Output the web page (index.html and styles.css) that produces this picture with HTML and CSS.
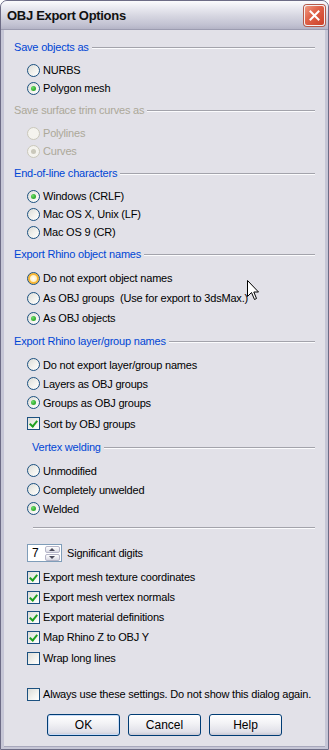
FILE: index.html
```html
<!DOCTYPE html>
<html>
<head>
  <title>OBJ Export Options</title>
  <meta charset="UTF-8" />
  <link rel="stylesheet" href="styles.css">
</head>
<body>
  <div class="window">
    <div class="titlebar">
      <span class="title">OBJ Export Options</span>
      <span class="close-btn">
        <svg width="11" height="11" viewBox="0 0 11 11"><path d="M1.5 1.5 L9.5 9.5 M9.5 1.5 L1.5 9.5" stroke="#fff" stroke-width="2" stroke-linecap="square"/></svg>
      </span>
    </div>

    <div class="client">
      <!-- Save objects as -->
      <div class="group">
        <div class="heading">Save objects as</div>
        <div class="options">
          <div class="option"><span class="radio"></span>NURBS</div>
          <div class="option"><span class="radio checked"></span>Polygon mesh</div>
        </div>
      </div>

      <div class="group">
        <div class="heading disabled">Save surface trim curves as</div>
        <div class="options">
          <div class="option disabled"><span class="radio"></span>Polylines</div>
          <div class="option disabled"><span class="radio checked"></span>Curves</div>
        </div>
      </div>

      <div class="group">
        <div class="heading">End-of-line characters</div>
        <div class="options">
          <div class="option"><span class="radio checked"></span>Windows (CRLF)</div>
          <div class="option"><span class="radio"></span>Mac OS X, Unix (LF)</div>
          <div class="option"><span class="radio"></span>Mac OS 9 (CR)</div>
        </div>
      </div>

      <div class="group">
        <div class="heading">Export Rhino object names</div>
        <div class="options loose">
          <div class="option"><span class="radio hover"></span>Do not export object names</div>
          <div class="option"><span class="radio"></span>As OBJ groups&nbsp; (Use for export to 3dsMax.)</div>
          <div class="option"><span class="radio checked"></span>As OBJ objects</div>
        </div>
      </div>

      <div class="group group-wide">
        <div class="heading">Export Rhino layer/group names</div>
        <div class="options mid">
          <div class="option"><span class="radio"></span>Do not export layer/group names</div>
          <div class="option"><span class="radio"></span>Layers as OBJ groups</div>
          <div class="option"><span class="radio checked"></span>Groups as OBJ groups</div>
          <div class="option option-sort"><span class="check checked"></span>Sort by OBJ groups</div>
        </div>
      </div>

      <div class="group">
        <div class="heading sub">Vertex welding</div>
        <div class="options mid">
          <div class="option"><span class="radio"></span>Unmodified</div>
          <div class="option"><span class="radio"></span>Completely unwelded</div>
          <div class="option"><span class="radio checked"></span>Welded</div>
        </div>
      </div>

      <div class="separator"></div>

      <div class="settings">
        <div class="option digits">
          <span class="spinner">
            <span class="spin-value">7</span>
            <span class="spin-btns">
              <span class="spin-btn up"></span>
              <span class="spin-btn down"></span>
            </span>
          </span>
          Significant digits
        </div>
        <div class="option"><span class="check checked"></span>Export mesh texture coordinates</div>
        <div class="option"><span class="check checked"></span>Export mesh vertex normals</div>
        <div class="option"><span class="check checked"></span>Export material definitions</div>
        <div class="option"><span class="check checked"></span>Map Rhino Z to OBJ Y</div>
        <div class="option wrap"><span class="check"></span>Wrap long lines</div>
        <div class="option always"><span class="check"></span>Always use these settings. Do not show this dialog again.</div>
      </div>

      <div class="buttons">
        <span class="btn default">OK</span>
        <span class="btn">Cancel</span>
        <span class="btn">Help</span>
      </div>
    </div>

    <!-- mouse pointer -->
    <svg class="cursor" width="13" height="21" viewBox="0 0 13 21">
      <path d="M0.5 0.5 L0.5 16.5 L4.5 12.5 L7.5 19.5 L9.5 18.5 L6.8 12 L11.5 12 Z" fill="#fff" stroke="#000" stroke-width="1" stroke-linejoin="miter"/>
    </svg>
  </div>
</body>
</html>
```

FILE: styles.css
```css
body {
  margin: 0;
  width: 329px;
  height: 750px;
  overflow: hidden;
  background: #fff;
}

.window {
  position: relative;
  box-sizing: border-box;
  width: 329px;
  height: 750px;
  border: 1px solid #6d6c86;
  border-radius: 7px 7px 0 0;
  background: #c6c6d6;
  display: flex;
  flex-direction: column;
  overflow: hidden;
}

.titlebar {
  height: 28px;
  flex: none;
  display: flex;
  align-items: center;
  justify-content: space-between;
  padding: 0 3px 0 6px;
  background: linear-gradient(to bottom, #fbfbfd 0%, #e9e9f0 25%, #d5d5e0 55%, #c2c2d2 85%, #b4b4c6 100%);
  border-bottom: 1px solid #9c9cb0;
}

.title {
  font-family: "Liberation Sans", Arial, sans-serif;
  font-weight: bold;
  font-size: 13px;
  letter-spacing: -0.3px;
  color: #111;
  margin-top: 1px;
}

.close-btn {
  width: 19px;
  height: 19px;
  border: 1px solid #f4f0f0;
  border-radius: 3px;
  background: linear-gradient(135deg, #f09a82 0%, #e0644a 40%, #cc4129 100%);
  display: flex;
  align-items: center;
  justify-content: center;
  box-shadow: 0 0 0 1px #b55a4a;
  margin-top: 1px;
}

.client {
  flex: 1;
  margin: 0 3px 2px;
  background: #e2e1e8;
  padding: 10px 10px 0;
  font-family: "Liberation Sans", Arial, sans-serif;
  font-size: 11px;
  letter-spacing: -0.2px;
  color: #000;
  border-bottom: 1px solid #a8a8bc;
}

.group {
  margin-bottom: 6px;
}

.group-wide {
  margin-bottom: 7px;
}

.heading {
  display: flex;
  align-items: center;
  gap: 3px;
  height: 14px;
  color: #0046d5;
  white-space: nowrap;
}

.heading::after {
  content: "";
  flex: 1;
  border-top: 1px solid #a3a3ab;
  border-bottom: 1px solid #fbfbfd;
  margin-top: 1px;
}

.heading.disabled {
  color: #aca899;
}

.heading.sub {
  margin-left: 18px;
}

.options {
  padding-left: 13px;
  margin-top: 7px;
}

.option {
  display: flex;
  align-items: center;
  gap: 3px;
  height: 18px;
  white-space: nowrap;
}

.options.loose .option {
  height: 20px;
}

.options.mid .option {
  height: 19px;
}

.options.mid .option-sort {
  margin-top: 2px;
}

.option.disabled {
  color: #aca899;
}

.radio {
  position: relative;
  box-sizing: border-box;
  width: 13px;
  height: 13px;
  flex: none;
  border: 1px solid #1c5180;
  border-radius: 50%;
  background: linear-gradient(135deg, #dcdcd7 0%, #f2f2ee 55%, #fff 100%);
}

.radio.checked::after {
  content: "";
  position: absolute;
  left: 3px;
  top: 3px;
  width: 5px;
  height: 5px;
  border-radius: 50%;
  background: radial-gradient(circle at 35% 35%, #6fe06b 0%, #3cb43a 50%, #21a121 100%);
}

.radio.hover {
  box-shadow: inset 0 0 0 2px #f8b636;
  background: radial-gradient(circle, #fff 0%, #fde9a8 60%, #f8b636 100%);
}

.option.disabled .radio {
  border-color: #cac8bb;
  background: #f4f3ee;
}

.option.disabled .radio.checked::after {
  background: #cac8bb;
}

.check {
  position: relative;
  box-sizing: border-box;
  width: 13px;
  height: 13px;
  flex: none;
  border: 1px solid #1c5180;
  background: linear-gradient(135deg, #dcdcd7 0%, #f4f4f0 60%, #fff 100%);
}

.check.checked::after {
  content: "";
  position: absolute;
  left: 3px;
  top: 1px;
  width: 3px;
  height: 6px;
  border: solid #21a121;
  border-width: 0 2px 2px 0;
  transform: rotate(40deg);
}

.separator {
  margin: 9px 0 0 19px;
  border-top: 1px solid #a3a3ab;
  border-bottom: 1px solid #fbfbfd;
}

.settings {
  padding-left: 13px;
  margin-top: 15px;
}

.settings .option {
  height: 20px;
}

.settings .option.digits {
  height: 18px;
  gap: 5px;
  margin-bottom: 5px;
}

.settings .option.wrap {
  margin-top: 1px;
}

.settings .option.always {
  margin-top: 16px;
}

.spinner {
  box-sizing: border-box;
  width: 35px;
  height: 18px;
  border: 1px solid #7f9db9;
  background: #fff;
  display: flex;
  align-items: center;
  justify-content: space-between;
  padding: 0 1px 0 4px;
  font-size: 12px;
}

.spin-btns {
  display: flex;
  flex-direction: column;
  gap: 1px;
}

.spin-btn {
  position: relative;
  box-sizing: border-box;
  width: 15px;
  height: 7px;
  border: 1px solid #b5b5c8;
  border-radius: 2px;
  background: linear-gradient(to bottom, #ffffff, #d9d9e3);
}

.spin-btn::after {
  content: "";
  position: absolute;
  left: 3px;
  width: 0;
  height: 0;
  border-left: 3.5px solid transparent;
  border-right: 3.5px solid transparent;
}

.spin-btn.up::after {
  top: 1px;
  border-bottom: 3px solid #4a4a5a;
}

.spin-btn.down::after {
  top: 1px;
  border-top: 3px solid #4a4a5a;
}

.buttons {
  display: flex;
  justify-content: center;
  gap: 8px;
  margin-top: 10px;
}

.btn {
  box-sizing: border-box;
  width: 73px;
  height: 22px;
  border: 1px solid #003c74;
  border-radius: 3px;
  background: linear-gradient(to bottom, #ffffff 0%, #f3f3f6 40%, #e0e0e8 85%, #c8c8d4 100%);
  display: flex;
  align-items: center;
  justify-content: center;
  font-size: 12px;
  letter-spacing: 0;
}

.btn.default {
  box-shadow: inset 0 0 0 1px #c8dcf8;
}

.cursor {
  position: absolute;
  left: 246px;
  top: 279px;
}
```
